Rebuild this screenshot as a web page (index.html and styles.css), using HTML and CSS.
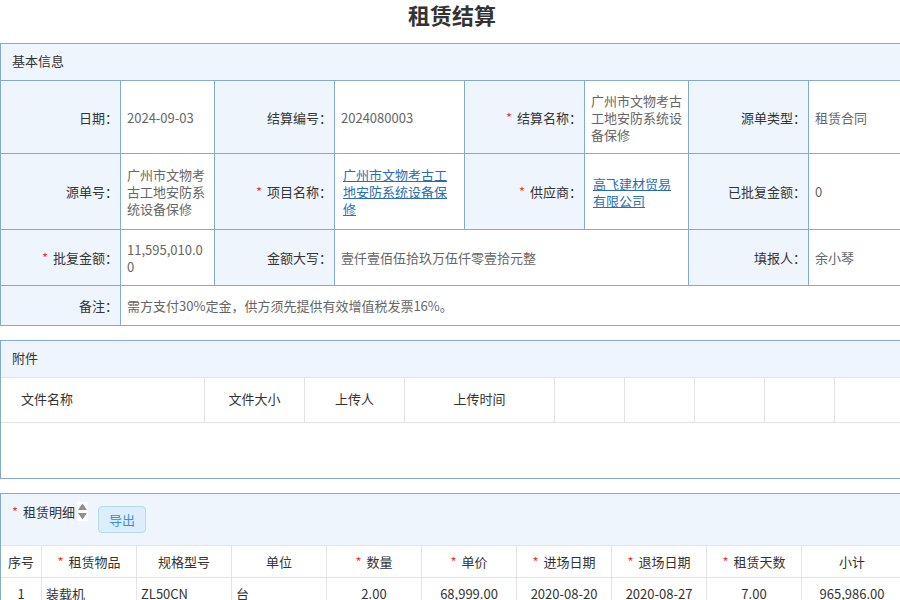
FILE: index.html
```html
<!DOCTYPE html>
<html lang="zh-CN">
<head>
    <meta charset="UTF-8">
    <meta name="viewport" content="width=device-width, initial-scale=1.0">
    <title>租赁结算</title>
    <link rel="stylesheet" href="styles.css">
</head>
<body>
    <div class="page">
        <h1 class="title">租赁结算</h1>

        <!-- 基本信息 -->
        <section class="panel">
            <div class="panel-head">基本信息</div>
            <div class="info-grid">
                <div class="lbl">日期：</div>
                <div class="val">2024-09-03</div>
                <div class="lbl">结算编号：</div>
                <div class="val">2024080003</div>
                <div class="lbl"><i class="req">*</i>结算名称：</div>
                <div class="val">广州市文物考古工地安防系统设备保修</div>
                <div class="lbl">源单类型：</div>
                <div class="val">租赁合同</div>

                <div class="lbl">源单号：</div>
                <div class="val">广州市文物考古工地安防系统设备保修</div>
                <div class="lbl"><i class="req">*</i>项目名称：</div>
                <div class="val"><a class="link" href="#">广州市文物考古工地安防系统设备保修</a></div>
                <div class="lbl"><i class="req">*</i>供应商：</div>
                <div class="val"><a class="link" href="#">高飞建材贸易有限公司</a></div>
                <div class="lbl">已批复金额：</div>
                <div class="val">0</div>

                <div class="lbl"><i class="req">*</i>批复金额：</div>
                <div class="val num-wrap">11,595,010.00</div>
                <div class="lbl">金额大写：</div>
                <div class="val span-3">壹仟壹佰伍拾玖万伍仟零壹拾元整</div>
                <div class="lbl">填报人：</div>
                <div class="val">余小琴</div>

                <div class="lbl">备注：</div>
                <div class="val span-7">需方支付30%定金，供方须先提供有效增值税发票16%。</div>
            </div>
        </section>

        <!-- 附件 -->
        <section class="panel">
            <div class="panel-head light">附件</div>
            <div class="att-head">
                <div class="att-cell first">文件名称</div>
                <div class="att-cell">文件大小</div>
                <div class="att-cell">上传人</div>
                <div class="att-cell">上传时间</div>
                <div class="att-cell"></div>
                <div class="att-cell"></div>
                <div class="att-cell"></div>
                <div class="att-cell"></div>
                <div class="att-cell"></div>
            </div>
            <div class="att-body"></div>
        </section>

        <!-- 租赁明细 -->
        <section class="panel">
            <div class="panel-head light tall">
                <div class="detail-title">
                    <i class="req">*</i>租赁明细
                    <span class="sort-icon">
                        <svg width="11" height="19" viewBox="0 0 11 19">
                            <path d="M5.5 1.5 L10 8 L1 8 Z" fill="#8f8f8f"/>
                            <path d="M1 11 L10 11 L5.5 17.5 Z" fill="#8f8f8f"/>
                        </svg>
                    </span>
                </div>
                <button class="btn-export">导出</button>
            </div>
            <div class="detail-grid">
                <div class="th">序号</div>
                <div class="th"><i class="req">*</i>租赁物品</div>
                <div class="th">规格型号</div>
                <div class="th">单位</div>
                <div class="th"><i class="req">*</i>数量</div>
                <div class="th"><i class="req">*</i>单价</div>
                <div class="th"><i class="req">*</i>进场日期</div>
                <div class="th"><i class="req">*</i>退场日期</div>
                <div class="th"><i class="req">*</i>租赁天数</div>
                <div class="th">小计</div>

                <div class="td center">1</div>
                <div class="td">装载机</div>
                <div class="td">ZL50CN</div>
                <div class="td">台</div>
                <div class="td center">2.00</div>
                <div class="td center">68,999.00</div>
                <div class="td center">2020-08-20</div>
                <div class="td center">2020-08-27</div>
                <div class="td center">7.00</div>
                <div class="td center">965,986.00</div>
            </div>
        </section>
    </div>
</body>
</html>
```

FILE: styles.css
```css
* {
    margin: 0;
    padding: 0;
    box-sizing: border-box;
}

html,
body {
    overflow: hidden;
}

body {
    font-family: "Noto Sans CJK SC", "Microsoft YaHei", sans-serif;
    font-size: 13px;
    line-height: 17px;
    color: #333;
    background-color: #ffffff;
}

.page {
    width: 904px;
}

.title {
    height: 43px;
    font-size: 22px;
    line-height: 28px;
    font-weight: bold;
    text-align: center;
    color: #333;
}

.panel {
    border: 1px solid #84abc9;
    margin-bottom: 14px;
}

.panel-head {
    height: 37px;
    padding: 0 0 3px 11px;
    display: flex;
    align-items: center;
    background-color: #eff5fd;
    border-bottom: 1px solid #84abc9;
}

.panel-head.light {
    border-bottom-color: #e3e3e3;
}

.panel-head.tall {
    height: 52px;
    padding-bottom: 0;
    align-items: flex-start;
}

.req {
    font-style: normal;
    color: #ee3b2f;
    margin-right: 5px;
}

/* basic info grid - the blue background shows through the gaps as lines */
.info-grid {
    display: grid;
    grid-template-columns: 119px 93px 119px 129px 119px 103px 119px 1fr;
    grid-template-rows: 72px 75px 55px 39px;
    gap: 1px;
    background-color: #84abc9;
}

.lbl {
    background-color: #eff5fd;
    display: flex;
    align-items: center;
    justify-content: flex-end;
    padding: 0 2px 0 6px;
    color: #333;
}

.val {
    background-color: #ffffff;
    display: flex;
    align-items: center;
    padding: 0 5px 0 6px;
    color: #666;
}

.num-wrap {
    word-break: break-all;
}

.span-3 {
    grid-column: span 3;
}

.span-7 {
    grid-column: span 7;
}

.link {
    display: inline-block;
    padding: 0 2px;
    color: #2a6db5;
    text-decoration: underline;
}

/* attachments */
.att-head {
    display: grid;
    grid-template-columns: 204px 100px 100px 150px 70px 70px 70px 70px 1fr;
    height: 45px;
    border-bottom: 1px solid #e3e3e3;
}

.att-cell {
    display: flex;
    align-items: center;
    justify-content: center;
    padding-bottom: 4px;
    border-right: 1px solid #e3e3e3;
}

.att-cell.first {
    justify-content: flex-start;
    padding-left: 20px;
}

.att-body {
    height: 55px;
}

/* rental details */
.detail-title {
    display: flex;
    align-items: center;
    margin-top: 8px;
}

.sort-icon {
    display: inline-flex;
    background-color: #ffffff;
    margin-left: 2px;
}

.btn-export {
    margin-top: 12px;
    margin-left: 10px;
    width: 48px;
    height: 27px;
    font-family: inherit;
    font-size: 13px;
    color: #3a8ee6;
    background-color: #dcedfb;
    border: 1px solid #b8d7f1;
    border-radius: 4px;
}

.detail-grid {
    display: grid;
    grid-template-columns: 41px repeat(8, 95px) 1fr;
}

.th,
.td {
    height: 32px;
    display: flex;
    align-items: center;
    padding-bottom: 1px;
    border-right: 1px solid #e3e3e3;
    border-bottom: 1px solid #e3e3e3;
    color: #333;
}

.th {
    justify-content: center;
}

.td {
    padding-left: 4px;
}

.td.center {
    justify-content: center;
    padding-left: 0;
}
```
